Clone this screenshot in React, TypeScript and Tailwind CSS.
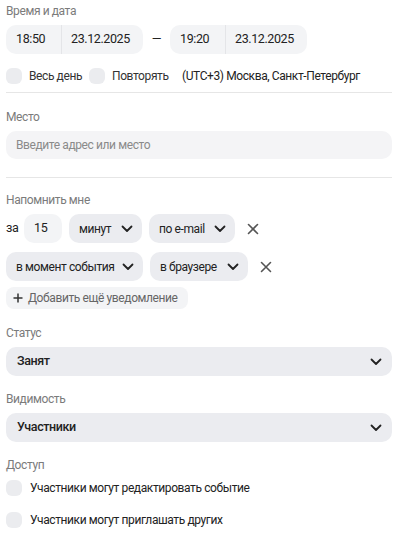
import React from "react";

function Chevron() {
  return (
    <svg viewBox="0 0 12 8" className="h-[8px] w-[12px] shrink-0" fill="none">
      <path d="M1.5 1.5 6 6l4.5-4.5" stroke="#222" strokeWidth="1.8" strokeLinecap="round" strokeLinejoin="round" />
    </svg>
  );
}

function Cross() {
  return (
    <svg viewBox="0 0 12 12" className="h-[12px] w-[12px]" fill="none">
      <path d="M1.5 1.5l9 9M10.5 1.5l-9 9" stroke="#555" strokeWidth="1.6" strokeLinecap="round" />
    </svg>
  );
}

function Label({ children }: { children: React.ReactNode }) {
  return <div className="mb-[6px] h-[16px] text-[12px] leading-[16px] text-[#7b7b7b]">{children}</div>;
}

function Box() {
  return <div className="h-[16px] w-[16px] shrink-0 rounded-[6px] bg-[#ebecef]" />;
}

function TimeBox({ time, date }: { time: string; date: string }) {
  return (
    <div className="flex h-[29px] shrink-0 items-stretch rounded-[10px] bg-[#f3f4f6] text-[12.5px] text-[#222]">
      <div className="flex w-[55px] items-center pl-[10px]">{time}</div>
      <div className="w-px bg-[#e4e5e8]" />
      <div className="flex w-[81px] items-center pl-[9px]">{date}</div>
    </div>
  );
}

function Drop({ label, w }: { label: string; w: string }) {
  return (
    <div className={`flex h-[29px] ${w} shrink-0 items-center justify-between rounded-[10px] bg-[#ebecf0] pl-[10px] pr-[9px] text-[12px] text-[#222]`}>
      <span>{label}</span>
      <Chevron />
    </div>
  );
}

function Select({ label }: { label: string }) {
  return (
    <div className="flex h-[29px] items-center justify-between rounded-[10px] bg-[#ebecf0] pl-[11px] pr-[10px] text-[12.5px] font-medium text-[#222]">
      <span>{label}</span>
      <Chevron />
    </div>
  );
}

export default function App() {
  return (
    <div
      className="w-[400px] whitespace-nowrap bg-white pl-[6px] pr-[8px] pt-[3px] pb-[12px] tracking-[-0.4px]"
      style={{ fontFamily: "Roboto, 'Noto Sans', sans-serif" }}
    >
      <Label>Время и дата</Label>
      <div className="flex items-center">
        <TimeBox time="18:50" date="23.12.2025" />
        <span className="w-[27px] text-center text-[12.5px] text-[#222]">—</span>
        <TimeBox time="19:20" date="23.12.2025" />
      </div>
      <div className="mt-[14px] flex h-[16px] items-center text-[12px]">
        <Box />
        <span className="ml-[7px] w-[60px] text-[#333]">Весь день</span>
        <Box />
        <span className="ml-[7px] w-[70px] text-[#333]">Повторять</span>
        <span className="text-[#222]">(UTC+3) Москва, Санкт-Петербург</span>
      </div>
      <div className="mt-[8px] h-px bg-[#e6e6e6]" />

      <div className="mt-[16px]">
        <Label>Место</Label>
        <div className="flex h-[28px] items-center rounded-[10px] bg-[#f4f4f6] pl-[10px] text-[12px] text-[#8a8a8a]">
          Введите адрес или место
        </div>
      </div>
      <div className="mt-[18px] h-px bg-[#e6e6e6]" />

      <div className="mt-[14px]">
        <Label>Напомнить мне</Label>
        <div className="flex items-center">
          <span className="w-[18px] text-[12.5px] text-[#222]">за</span>
          <div className="flex h-[29px] w-[38px] shrink-0 items-center rounded-[10px] bg-[#f3f4f6] pl-[10px] text-[12.5px] text-[#222]">15</div>
          <div className="ml-[7px]">
            <Drop label="минут" w="w-[73px]" />
          </div>
          <div className="ml-[7px]">
            <Drop label="по e-mail" w="w-[86px]" />
          </div>
          <div className="ml-[12px] flex w-[12px] justify-center">
            <Cross />
          </div>
        </div>
        <div className="mt-[9px] flex items-center">
          <Drop label="в момент события" w="w-[137px]" />
          <div className="ml-[7px]">
            <Drop label="в браузере" w="w-[98px]" />
          </div>
          <div className="ml-[12px] flex w-[12px] justify-center">
            <Cross />
          </div>
        </div>
        <div className="mt-[6px] flex h-[22px] w-[182px] items-center gap-[5px] rounded-[8px] bg-[#f3f4f6] pl-[7px] text-[12px] text-[#666]">
          <svg viewBox="0 0 10 10" className="h-[10px] w-[10px] shrink-0" fill="none">
            <path d="M5 0.5v9M0.5 5h9" stroke="#333" strokeWidth="1.5" />
          </svg>
          <span>Добавить ещё уведомление</span>
        </div>
      </div>

      <div className="mt-[16px]">
        <Label>Статус</Label>
        <Select label="Занят" />
      </div>
      <div className="mt-[15px]">
        <Label>Видимость</Label>
        <Select label="Участники" />
      </div>

      <div className="mt-[15px]">
        <Label>Доступ</Label>
        <div className="mt-[6px] flex flex-col gap-[14px] text-[12px] text-[#222]">
          <div className="flex items-center">
            <Box />
            <span className="ml-[8px]">Участники могут редактировать событие</span>
          </div>
          <div className="flex items-center">
            <Box />
            <span className="ml-[8px]">Участники могут приглашать других</span>
          </div>
        </div>
      </div>
    </div>
  );
}
